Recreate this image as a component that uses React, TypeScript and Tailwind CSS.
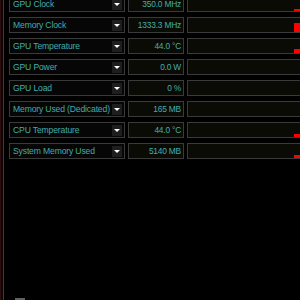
const rows = [
  { label: "GPU Clock", value: "350.0 MHz", bar: 2 },
  { label: "Memory Clock", value: "1333.3 MHz", bar: 9 },
  { label: "GPU Temperature", value: "44.0 °C", bar: 4 },
  { label: "GPU Power", value: "0.0 W", bar: 0 },
  { label: "GPU Load", value: "0 %", bar: 0 },
  { label: "Memory Used (Dedicated)", value: "165 MB", bar: 0 },
  { label: "CPU Temperature", value: "44.0 °C", bar: 3 },
  { label: "System Memory Used", value: "5140 MB", bar: 3 },
];

const SensorRow = ({ label, value, bar }: { label: string; value: string; bar: number }) => (
  <div className="flex h-[16px] gap-[3px]">
    <div className="flex w-[116px] shrink-0 items-center justify-between border border-[#3a3a3a] bg-[#060606] pl-[3px] pr-[2px]">
      <span className="whitespace-nowrap text-[8.6px] tracking-[-0.15px] text-[#42adad]">{label}</span>
      <div className="flex h-[11px] w-[10px] shrink-0 items-center justify-center bg-[#1e1e1e]">
        <div className="h-0 w-0 border-x-[3px] border-t-[3px] border-x-transparent border-t-white" />
      </div>
    </div>
    <div className="flex w-[56px] shrink-0 items-center justify-end border border-[#3a3a3a] bg-[#0b0b05] pr-[2px]">
      <span className="whitespace-nowrap text-[8.4px] tracking-[-0.2px] text-[#42adad]">{value}</span>
    </div>
    <div className="relative w-[120px] shrink-0 border border-[#3a3a3a] border-r-0 bg-[#0b0b05]">
      {bar > 0 && (
        <div className="absolute bottom-0 left-[106px] w-[6px] bg-[#ff0000]" style={{ height: bar }} />
      )}
    </div>
  </div>
);

export default function App() {
  return (
    <div
      className="flex h-[300px] w-[300px] overflow-hidden bg-black"
      style={{ fontFamily: '"Liberation Sans", Arial, sans-serif' }}
    >
      <div className="w-[1px] shrink-0 bg-[#2c0d0d]" />
      <div className="w-[2px] shrink-0 bg-[#120505]" />
      <div className="w-[1px] shrink-0 bg-[#3a3a3a]" />
      <div className="flex flex-1 flex-col pl-[5px]">
        <div className="-mt-[4px] flex flex-col gap-[5px]">
          {rows.map((r) => (
            <SensorRow key={r.label} {...r} />
          ))}
        </div>
        <div className="mt-auto ml-[6px] h-[2px] w-[10px] bg-[#606060]" />
      </div>
    </div>
  );
}
